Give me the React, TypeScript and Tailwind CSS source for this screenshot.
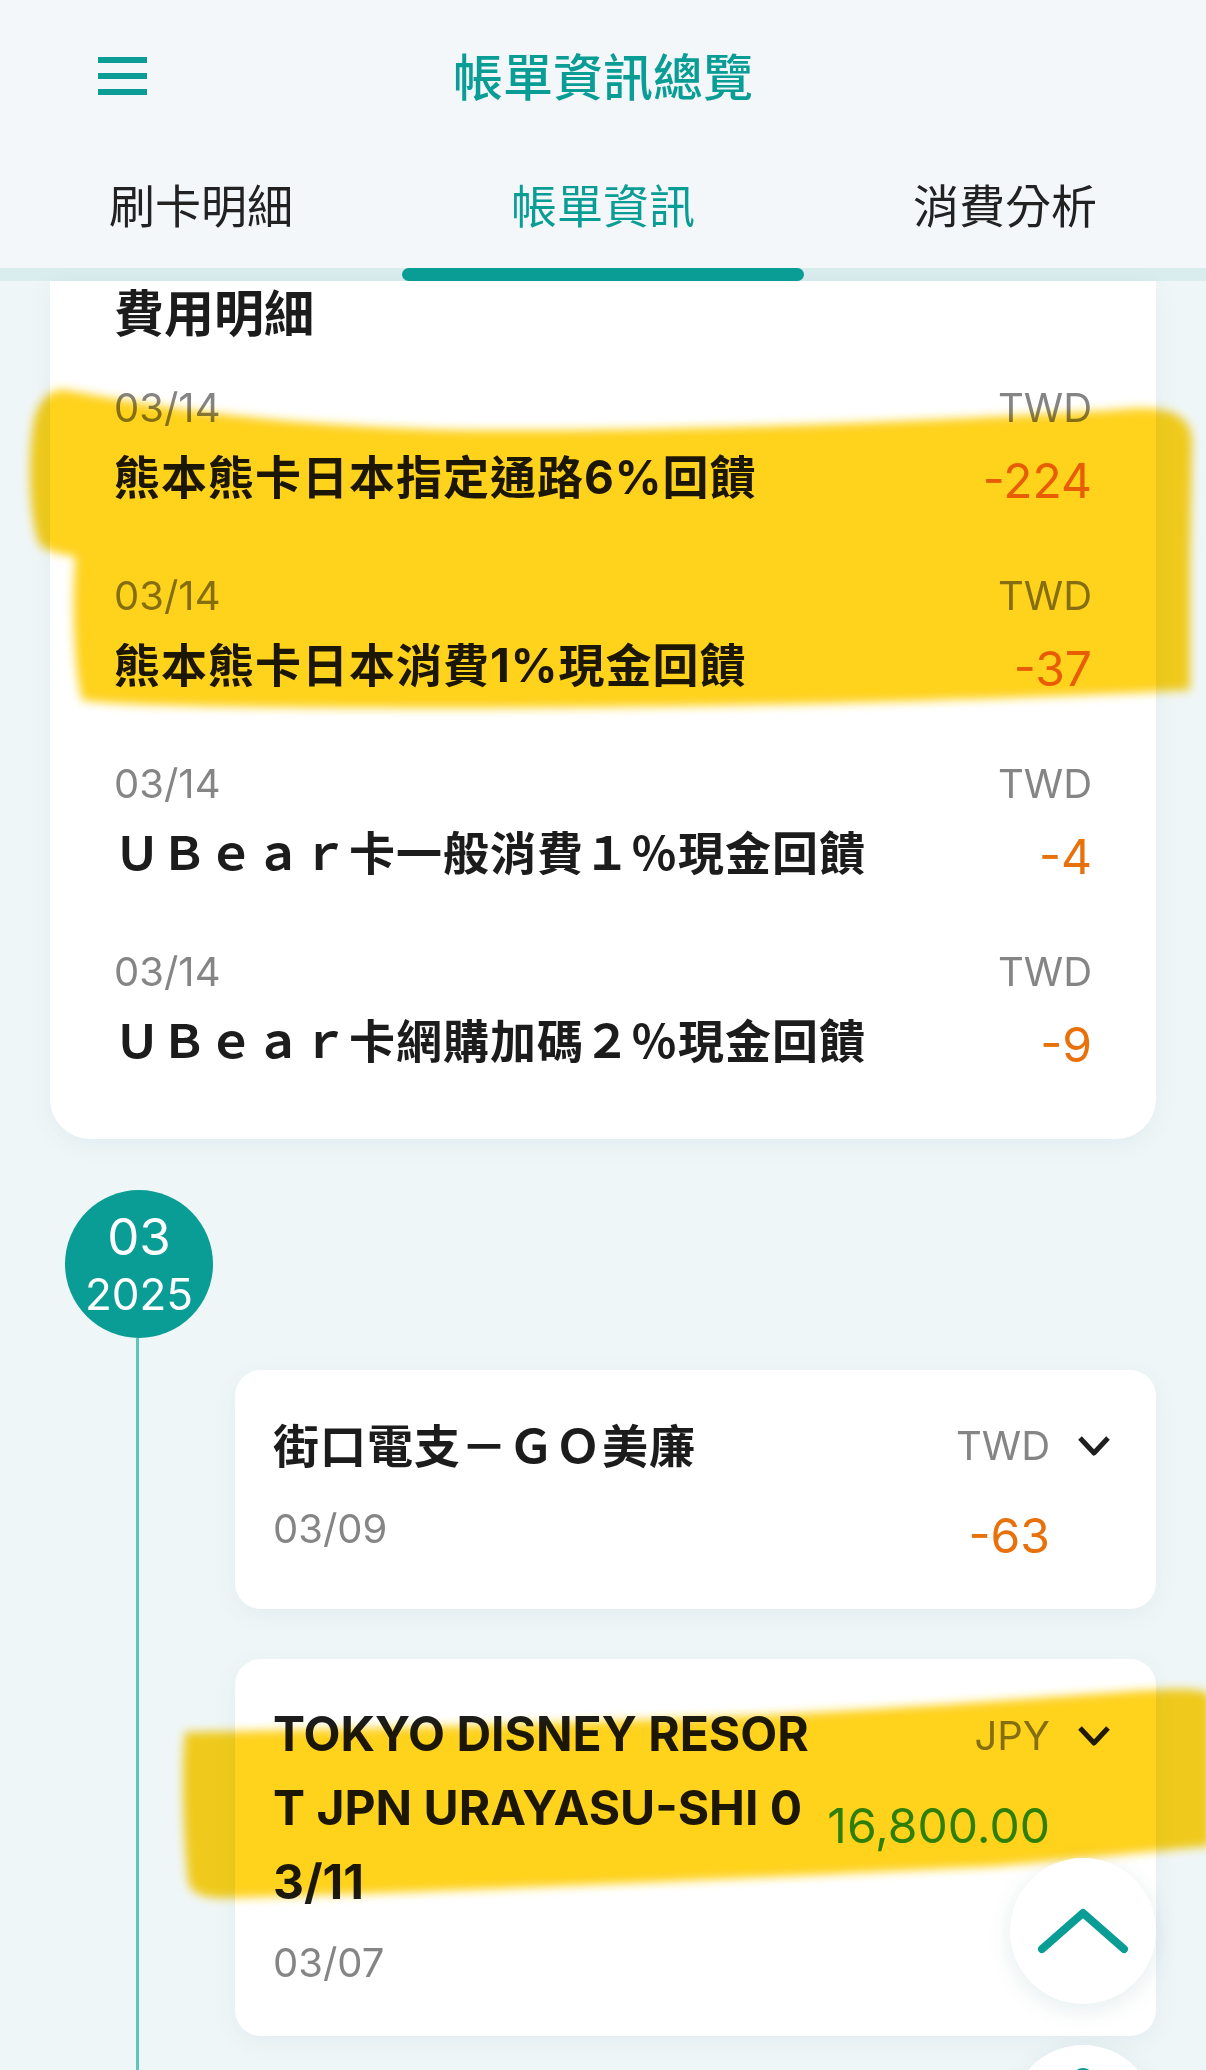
const rows = [
  { date: "03/14", title: "熊本熊卡日本指定通路6%回饋", amount: "-224" },
  { date: "03/14", title: "熊本熊卡日本消費1%現金回饋", amount: "-37" },
  { date: "03/14", title: "ＵＢｅａｒ卡一般消費１％現金回饋", amount: "-4" },
  { date: "03/14", title: "ＵＢｅａｒ卡網購加碼２％現金回饋", amount: "-9" },
]

const ChevronDown = () => (
  <svg width="34" height="22" viewBox="0 0 34 22" fill="none">
    <polyline points="3,3 17,18 31,3" stroke="#1f1f1f" strokeWidth="5" strokeLinejoin="round" />
  </svg>
)

const Highlights = () => (
  <svg
    className="pointer-events-none absolute left-0 top-0 mix-blend-multiply"
    width="1206"
    height="2070"
    viewBox="0 0 1206 2070"
  >
    <defs>
      <filter id="hl" x="-5%" y="-20%" width="110%" height="140%">
        <feGaussianBlur stdDeviation="5" />
      </filter>
    </defs>
    <g fill="#ffd21c" filter="url(#hl)">
      <path d="M66,390 C120,400 250,425 460,430 C700,432 950,420 1115,410 C1160,405 1190,410 1192,440 L1190,560 C1100,566 700,572 300,566 C150,564 60,562 40,545 C28,520 28,450 34,420 C40,398 52,388 66,390 Z" />
      <path d="M77,540 C300,530 800,525 1190,530 L1190,690 C1000,700 700,708 460,708 C250,708 120,706 82,700 C72,660 72,580 77,540 Z" />
      <path d="M185,1732 C300,1730 500,1726 769,1715 C950,1706 1080,1694 1154,1690 C1190,1688 1206,1690 1210,1695 L1210,1846 C1150,1852 1080,1858 1000,1866 C800,1876 500,1890 231,1898 C200,1899 190,1892 188,1880 C182,1820 182,1760 185,1732 Z" />
    </g>
  </svg>
)

export default function App() {
  return (
    <div className="relative h-[2070px] w-[1206px] overflow-hidden bg-[#eff6f8] font-['Inter','Noto_Sans_CJK_TC',sans-serif] text-[#1c1c1c]">
      {/* header */}
      <div className="bg-[#f3f7fa]">
        <div className="grid h-[178px] grid-cols-[1fr_auto_1fr] items-start pt-[48px]">
          <div className="flex flex-col gap-[10px] pl-[98px] pt-[9px]">
            <span className="h-[6px] w-[49px] bg-[#0a9d95]" />
            <span className="h-[6px] w-[49px] bg-[#0a9d95]" />
            <span className="h-[6px] w-[49px] bg-[#0a9d95]" />
          </div>
          <h1 className="text-[50px] font-medium leading-[60px] text-[#0a9d95]">帳單資訊總覽</h1>
          <div />
        </div>
        <div className="grid h-[90px] grid-cols-3 text-center text-[46px] leading-[56px]">
          <span className="text-[#222]">刷卡明細</span>
          <span className="text-[#0a9d95]">帳單資訊</span>
          <span className="text-[#222]">消費分析</span>
        </div>
      </div>
      <div className="grid h-[13px] grid-cols-3 bg-[#d9ecee]">
        <div />
        <div className="rounded-full bg-[#0a9d95]" />
        <div />
      </div>

      {/* fee detail card */}
      <div className="mx-[50px] rounded-b-[40px] bg-white px-[64px] pb-[70px] pt-[3px] shadow-[0_6px_24px_rgba(0,90,90,0.06)]">
        <h2 className="text-[50px] font-bold leading-[60px]">費用明細</h2>
        <div className="mt-[40px] flex flex-col gap-[67px]">
          {rows.map((row, i) => (
            <div key={i}>
              <div className="flex justify-between text-[40px] leading-[48px] text-[#858585]">
                <span>{row.date}</span>
                <span>TWD</span>
              </div>
              <div className="mt-[17px] flex items-baseline justify-between">
                <span className="text-[46px] font-bold leading-[56px] tracking-[1px]">{row.title}</span>
                <span className="translate-y-[4px] text-[48px] leading-[56px] text-[#e8710c]">{row.amount}</span>
              </div>
            </div>
          ))}
        </div>
      </div>

      {/* timeline */}
      <div className="mt-[51px] flex">
        <div className="flex w-[235px] flex-col">
          <div className="ml-[65px] flex size-[148px] flex-col items-center justify-center rounded-full bg-[#0a9d95] text-white">
            <span className="text-[51px] leading-[52px]">03</span>
            <span className="mt-[8px] text-[44px] leading-[46px]">2025</span>
          </div>
          <div className="ml-[136px] w-[3px] flex-1 bg-[#5cc6bd]" />
        </div>

        <div className="flex w-[921px] flex-col gap-[50px] pb-[200px] pt-[180px]">
          <div className="flex justify-between rounded-[26px] bg-white pb-[45px] pl-[38px] pr-[45px] pt-[48px] shadow-[0_6px_24px_rgba(0,90,90,0.06)]">
            <div className="flex flex-col">
              <span className="text-[46px] font-bold leading-[56px] tracking-[1px]">街口電支－ＧＯ美廉</span>
              <span className="mt-[31px] text-[40px] leading-[48px] text-[#858585]">03/09</span>
            </div>
            <div className="mt-[4px] flex flex-col items-end">
              <div className="flex items-center gap-[27px]">
                <span className="text-[40px] leading-[48px] text-[#858585]">TWD</span>
                <ChevronDown />
              </div>
              <span className="mr-[61px] mt-[38px] text-[48px] leading-[56px] text-[#e8710c]">-63</span>
            </div>
          </div>

          <div className="flex justify-between rounded-[26px] bg-white pb-[49px] pl-[38px] pr-[45px] pt-[38px] shadow-[0_6px_24px_rgba(0,90,90,0.06)]">
            <div className="flex flex-col">
              <span className="flex flex-col text-[48px] font-bold leading-[74px]">
                <span>TOKYO DISNEY RESOR</span>
                <span>T JPN URAYASU-SHI 0</span>
                <span>3/11</span>
              </span>
              <span className="mt-[20px] text-[40px] leading-[48px] text-[#858585]">03/07</span>
            </div>
            <div className="mt-[15px] flex flex-col items-end">
              <div className="flex items-center gap-[27px]">
                <span className="text-[40px] leading-[48px] text-[#858585]">JPY</span>
                <ChevronDown />
              </div>
              <span className="mr-[61px] mt-[38px] text-[48px] leading-[56px] text-[#2f9a1e]">16,800.00</span>
            </div>
          </div>
        </div>
      </div>

      <Highlights />

      {/* floating buttons */}
      <button className="absolute left-[1010px] top-[1858px] flex size-[146px] items-center justify-center rounded-full bg-white shadow-[0_6px_24px_rgba(0,90,90,0.10)]">
        <svg width="92" height="48" viewBox="0 0 92 48" fill="none">
          <polyline points="5,42 46,6 87,42" stroke="#0a9d95" strokeWidth="8" strokeLinecap="round" strokeLinejoin="round" />
        </svg>
      </button>
      <button className="absolute left-[1010px] top-[2045px] flex size-[146px] justify-center rounded-full bg-white pt-[20px] shadow-[0_6px_24px_rgba(0,90,90,0.10)]">
        <svg width="24" height="24" viewBox="0 0 24 24" fill="none">
          <path d="M4,14 A8,8 0 0 1 20,14" stroke="#0a9d95" strokeWidth="6" strokeLinecap="round" />
        </svg>
      </button>
    </div>
  )
}
